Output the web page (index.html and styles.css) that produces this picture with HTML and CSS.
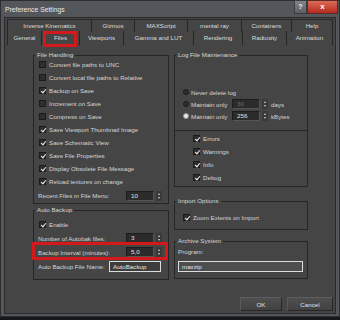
FILE: index.html
```html
<!DOCTYPE html>
<html lang="en">
<head>
    <meta charset="UTF-8">
    <meta name="viewport" content="width=device-width, initial-scale=1.0">
    <title>Preference Settings</title>
    <link rel="stylesheet" href="styles.css">
</head>
<body>
    <div class="window">
        <!-- Title bar -->
        <div class="titlebar">
            <span class="title">Preference Settings</span>
            <div class="caption-buttons">
                <span class="cap-help">?</span>
                <span class="cap-close">x</span>
            </div>
        </div>

        <div class="client">
            <!-- Tabs -->
            <div class="tabs">
                <div class="tab-row row-back">
                    <div class="tab">Inverse Kinematics</div>
                    <div class="tab">Gizmos</div>
                    <div class="tab">MAXScript</div>
                    <div class="tab">mental ray</div>
                    <div class="tab">Containers</div>
                    <div class="tab">Help</div>
                </div>
                <div class="tab-row row-front">
                    <div class="tab">General</div>
                    <div class="tab active marked">Files</div>
                    <div class="tab">Viewports</div>
                    <div class="tab">Gamma and LUT</div>
                    <div class="tab">Rendering</div>
                    <div class="tab">Radiosity</div>
                    <div class="tab">Animation</div>
                </div>
            </div>

            <div class="panes">
                <!-- Left column -->
                <div class="col">
                    <div class="group group-files">
                        <div class="group-title">File Handling</div>
                        <div class="opts">
                            <div class="check"><span class="box"></span>Convert file paths to UNC</div>
                            <div class="check"><span class="box"></span>Convert local file paths to Relative</div>
                            <div class="check"><span class="box on"></span>Backup on Save</div>
                            <div class="check"><span class="box"></span>Increment on Save</div>
                            <div class="check"><span class="box"></span>Compress on Save</div>
                            <div class="check"><span class="box on"></span>Save Viewport Thumbnail Image</div>
                            <div class="check"><span class="box on"></span>Save Schematic View</div>
                            <div class="check"><span class="box on"></span>Save File Properties</div>
                            <div class="check"><span class="box on"></span>Display Obsolete File Message</div>
                            <div class="check"><span class="box on"></span>Reload textures on change</div>
                            <div class="field">
                                <span class="field-label">Recent Files in File Menu:</span>
                                <span class="spinner"><span class="spin-value">10</span><span class="spin-arrows"></span></span>
                            </div>
                        </div>
                    </div>

                    <div class="group group-backup">
                        <div class="group-title">Auto Backup</div>
                        <div class="opts">
                            <div class="check"><span class="box on"></span>Enable</div>
                            <div class="field tall">
                                <span class="field-label">Number of Autobak files:</span>
                                <span class="spinner"><span class="spin-value">3</span><span class="spin-arrows"></span></span>
                            </div>
                            <div class="field tall marked">
                                <span class="field-label">Backup Interval (minutes):</span>
                                <span class="spinner"><span class="spin-value">5,0</span><span class="spin-arrows"></span></span>
                            </div>
                            <div class="field tall">
                                <span class="field-label short">Auto Backup File Name:</span>
                                <span class="text-input name-input">AutoBackup</span>
                            </div>
                        </div>
                    </div>
                </div>

                <!-- Right column -->
                <div class="col">
                    <div class="group group-log">
                        <div class="group-title">Log File Maintenance</div>
                        <div class="log-options">
                            <div class="radio-row"><span class="radio"><span class="dot"></span>Never delete log</span></div>
                            <div class="radio-row">
                                <span class="radio"><span class="dot"></span>Maintain only</span>
                                <span class="spinner"><span class="spin-value off">30</span><span class="spin-arrows"></span></span>
                                <span class="unit">days</span>
                            </div>
                            <div class="radio-row">
                                <span class="radio"><span class="dot on"></span>Maintain only</span>
                                <span class="spinner"><span class="spin-value">256</span><span class="spin-arrows"></span></span>
                                <span class="unit">kBytes</span>
                            </div>
                        </div>
                        <div class="divider"></div>
                        <div class="log-levels">
                            <div class="check"><span class="box on"></span>Errors</div>
                            <div class="check"><span class="box on"></span>Warnings</div>
                            <div class="check"><span class="box on"></span>Info</div>
                            <div class="check"><span class="box on"></span>Debug</div>
                        </div>
                    </div>

                    <div class="group group-import">
                        <div class="group-title">Import Options</div>
                        <div class="opts">
                            <div class="check"><span class="box on"></span>Zoom Extents on Import</div>
                        </div>
                    </div>

                    <div class="group group-archive">
                        <div class="group-title">Archive System</div>
                        <div class="opts">
                            <div class="program-label">Program:</div>
                            <div class="text-input program-input">maxzip</div>
                        </div>
                    </div>
                </div>
            </div>

            <!-- Dialog buttons -->
            <div class="buttons">
                <button class="btn btn-ok">OK</button>
                <button class="btn btn-cancel">Cancel</button>
            </div>
        </div>
    </div>
</body>
</html>
```

FILE: styles.css
```css
* {
    box-sizing: border-box;
}

body {
    margin: 0;
    background-color: #161718;
    color: #d6d6d6;
    font-family: "Liberation Sans", Arial, sans-serif;
    font-size: 6.2px;
}

/* Window frame */
.window {
    width: 340px;
    height: 317px;
    background-color: #53575c;
    border: 1px solid #2b2d30;
    display: flex;
    flex-direction: column;
}

.titlebar {
    height: 16px;
    display: flex;
    justify-content: space-between;
    align-items: flex-start;
    padding-left: 4px;
}

.title {
    font-size: 6.8px;
    line-height: 18px;
    color: #e8e8e8;
}

.caption-buttons {
    display: flex;
    margin-top: -1px;
    margin-right: 1px;
}

.cap-help {
    width: 13px;
    height: 14px;
    background: linear-gradient(#80858a, #5c6065);
    border: 1px solid #3a3d40;
    color: #eeeeee;
    text-align: center;
    line-height: 12px;
    font-size: 7px;
    font-weight: bold;
}

.cap-close {
    width: 31px;
    height: 14px;
    background: linear-gradient(#de6a58, #b32b1e);
    border: 1px solid #5a2a24;
    color: #ffffff;
    text-align: center;
    line-height: 11px;
    font-size: 8px;
    font-weight: bold;
}

.client {
    flex: 1;
    margin: 0 3px 2px 3px;
    background-color: #454545;
    border: 1px solid #2a2a2a;
    display: flex;
    flex-direction: column;
}

/* Tabs */
.tabs {
    margin: 1px 2px 0 2px;
}

.tab-row {
    display: grid;
}

.row-back {
    grid-template-columns: 85px 43px 53px 54px 50px 41px;
    height: 12px;
    border-top: 1px solid #2a2a2a;
}

.row-front {
    grid-template-columns: 35px 38px 44px 70px 49px 44px 46px;
    height: 14px;
}

.tab {
    position: relative;
    border-right: 1px solid #262626;
    text-align: center;
    color: #dddddd;
    line-height: 12px;
    white-space: nowrap;
}

.row-front .tab {
    line-height: 14px;
}

.tab:first-child {
    border-left: 1px solid #262626;
}

.marked {
    position: relative;
}

.marked::after {
    content: "";
    position: absolute;
    border: 3px solid #d3191b;
}

.tab.marked::after {
    top: 0;
    bottom: -2px;
    left: 1px;
    right: 2px;
}

.field.marked::after {
    top: -3px;
    bottom: -1px;
    left: -7px;
    right: 0;
}

/* Group boxes */
.panes {
    display: grid;
    grid-template-columns: 136px 134px;
    column-gap: 5px;
    padding: 10px 0 0 28px;
    white-space: nowrap;
}

.group {
    border: 1px solid #262626;
}

.group-title {
    display: table;
    margin: -5px 0 0 1px;
    padding: 0 2px;
    line-height: 8px;
    background-color: #454545;
}

.group-files .opts {
    margin-top: -1px;
    padding: 0 0 1px 5px;
}

.group-backup {
    margin-top: 6px;
}

.group-backup .opts {
    margin-top: 4px;
    padding: 0 0 6px 5px;
}

.check {
    display: flex;
    align-items: center;
    height: 13px;
}

.box {
    position: relative;
    flex-shrink: 0;
    width: 7px;
    height: 7px;
    margin-right: 3px;
    background-color: #2e2e2e;
    border: 1px solid #1b1b1b;
}

.box.on::after {
    content: "";
    position: absolute;
    left: 1.5px;
    top: -0.5px;
    width: 2px;
    height: 4px;
    border: solid #f2f2f2;
    border-width: 0 1.2px 1.2px 0;
    transform: rotate(40deg);
}

.field {
    display: flex;
    align-items: center;
    height: 13px;
    margin-top: 1px;
}

.field.tall {
    height: 14px;
    margin-top: 0;
}

.field-label {
    width: 88px;
    margin-left: -1px;
}

.field-label.short {
    width: 71px;
}

.spinner {
    display: flex;
    align-items: center;
    gap: 2px;
}

.spin-value {
    width: 28px;
    height: 10px;
    padding-left: 4px;
    line-height: 8px;
    background-color: #2b2b2b;
    border: 1px solid #1c1c1c;
    border-bottom-color: #555555;
    border-right-color: #555555;
    color: #e2e2e2;
}

.spin-value.off {
    color: #6e6e6e;
}

.spin-arrows {
    width: 6px;
    height: 10px;
    display: flex;
    flex-direction: column;
    justify-content: space-evenly;
    align-items: center;
    background-color: #3a3a3a;
}

.spin-arrows::before,
.spin-arrows::after {
    content: "";
    border-left: 1.5px solid transparent;
    border-right: 1.5px solid transparent;
}

.spin-arrows::before {
    border-bottom: 2px solid #d0d0d0;
}

.spin-arrows::after {
    border-top: 2px solid #d0d0d0;
}

.text-input {
    height: 11px;
    padding-left: 3px;
    line-height: 9px;
    border: 1px solid #dcdcdc;
    color: #e6e6e6;
}

.name-input {
    width: 52px;
    background-color: #3d3d3d;
}

/* Right column */
.log-options {
    margin-top: 27px;
    padding-left: 8px;
}

.radio-row {
    display: flex;
    align-items: center;
    height: 12px;
}

.radio {
    display: flex;
    align-items: center;
    width: 49px;
    flex-shrink: 0;
}

.dot {
    position: relative;
    flex-shrink: 0;
    width: 6px;
    height: 6px;
    margin-right: 2px;
    border-radius: 50%;
    background-color: #2e2e2e;
    border: 1px solid #1b1b1b;
}

.dot.on {
    background-color: #e8e8e8;
    border-color: #9a9a9a;
}

.unit {
    margin-left: 3px;
}

.divider {
    height: 1px;
    margin-top: 8px;
    background-color: #262626;
}

.log-levels {
    margin-top: 1px;
    padding: 0 0 2px 18px;
}

.group-import {
    margin-top: 14px;
}

.group-import .opts {
    margin-top: 6px;
    padding: 0 0 5px 8px;
}

.group-archive {
    margin-top: 11px;
}

.group-archive .opts {
    padding: 2px 0 6px 3px;
}

.program-label {
    line-height: 10px;
}

.program-input {
    width: 125px;
    margin-top: 4px;
    background-color: #4e4e4e;
}

/* Dialog buttons */
.buttons {
    margin-top: auto;
    display: flex;
    justify-content: flex-end;
    gap: 5px;
    padding: 0 2px 2px 0;
}

.btn {
    height: 14px;
    padding: 0;
    font: inherit;
    color: #e0e0e0;
    background: linear-gradient(#4e4e4e, #424242);
    border: 1px solid #262626;
    border-top-color: #5e5e5e;
    border-left-color: #5a5a5a;
}

.btn-ok {
    width: 42px;
}

.btn-cancel {
    width: 46px;
}
```
